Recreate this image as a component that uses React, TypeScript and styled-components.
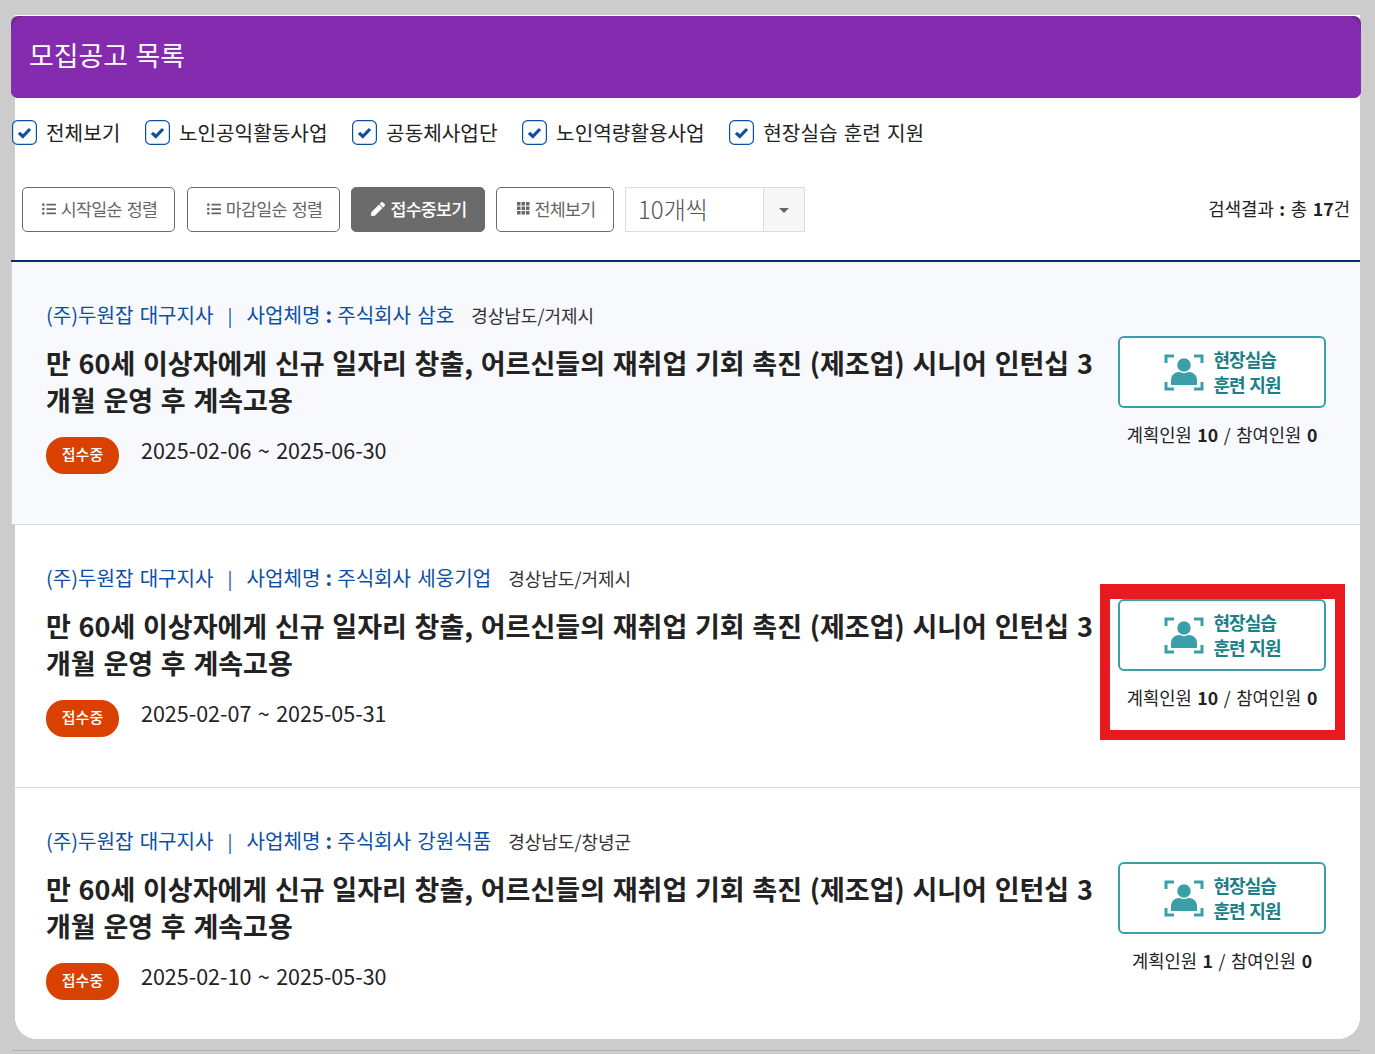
import React from 'react';
import styled, { createGlobalStyle } from 'styled-components';
import { FaListUl, FaPen } from 'react-icons/fa';

const GlobalStyle = createGlobalStyle`
  html, body {
    margin: 0;
    padding: 0;
    background: #cccccc;
    font-family: 'Noto Sans CJK KR', 'Noto Sans', sans-serif;
    word-spacing: 0.1em;
    color: #222222;
  }
`;

const Page = styled.div`
  width: 1375px;
  height: 1054px;
  padding: 15px 15px 0;
  box-sizing: border-box;
  overflow: hidden;
`;

const Card = styled.main`
  background: #ffffff;
  border-radius: 0 0 22px 22px;
  padding-top: 1px;
`;

const Header = styled.header`
  height: 82px;
  margin: 0 -1px 0 -4px;
  background: #6f2a96;
  border-radius: 7px;
  overflow: hidden;
`;

const HeaderFace = styled.div`
  height: 100%;
  box-sizing: border-box;
  padding: 0 0 3px 18px;
  display: flex;
  align-items: center;
  background: #852bb0;
  border-radius: 16px 16px 7px 7px;
`;

const Title = styled.h2`
  margin: 0;
  color: #ffffff;
  font-size: 26.9px;
  font-weight: 400;
  line-height: 1;
`;

const Filters = styled.div`
  height: 70px;
  margin-left: -3px;
  display: flex;
  align-items: center;
  gap: 24.6px;
`;

const Filter = styled.label`
  display: flex;
  align-items: center;
  gap: 9px;
  padding-top: 1px;
  font-size: 20.2px;
  line-height: 1;
  color: #222222;

  svg {
    margin-top: -3px;
  }
`;

const Toolbar = styled.div`
  height: 45px;
  margin: 19px 10px 28px 7px;
  display: flex;
  align-items: center;
  gap: 11px;
`;

const SortButton = styled.button<{ $active?: boolean; $w: number }>`
  width: ${({ $w }) => $w}px;
  height: 45px;
  padding: 0 0 2px 2px;
  display: flex;
  align-items: center;
  justify-content: center;
  gap: 5px;
  box-sizing: border-box;
  font-family: inherit;
  font-size: 17.33px;
  font-weight: ${({ $active }) => ($active ? 500 : 400)};
  letter-spacing: -0.7px;
  word-spacing: 0.1em;
  color: ${({ $active }) => ($active ? '#ffffff' : '#666666')};
  background: ${({ $active }) => ($active ? '#6b6b6b' : '#ffffff')};
  border: 1px solid #6b6b6b;
  border-radius: 5px;

  &:first-child {
    margin-right: 1px;
  }

  svg {
    font-size: 14px;
    flex: none;
  }
`;

const Select = styled.div`
  width: 180px;
  height: 45px;
  box-sizing: border-box;
  display: flex;
  border: 1px solid #dddddd;
  background: #ffffff;
`;

const SelectValue = styled.div`
  flex: 1;
  padding: 0 0 3px 12px;
  display: flex;
  align-items: center;
  font-size: 24px;
  font-weight: 300;
  color: #555555;
`;

const SelectArrow = styled.div`
  width: 40px;
  display: flex;
  align-items: center;
  justify-content: center;
  background: #f7f7f7;
  border-left: 1px solid #dddddd;

  &::before {
    content: '';
    margin-top: 2px;
    border-top: 5px solid #666666;
    border-left: 5px solid transparent;
    border-right: 5px solid transparent;
  }
`;

const ResultCount = styled.div`
  margin-left: auto;
  padding-bottom: 3px;
  font-size: 17.8px;

  b {
    font-weight: 700;
  }
`;

const List = styled.div`
  margin: 0 0 0 -4px;
  border-top: 2px solid #0a2a75;
`;

const Row = styled.article<{ $tinted?: boolean; $last?: boolean }>`
  position: relative;
  height: ${({ $last }) => ($last ? 251 : 263)}px;
  box-sizing: border-box;
  padding: 38px 34px 0 ${({ $tinted }) => ($tinted ? 34 : 31)}px;
  margin-left: ${({ $tinted }) => ($tinted ? 0 : 4)}px;
  display: flex;
  justify-content: space-between;
  background: ${({ $tinted }) => ($tinted ? '#f8f9fd' : '#ffffff')};
  border-bottom: ${({ $last }) => ($last ? 'none' : '1px solid #d4d6da')};
  border-left: ${({ $tinted }) => ($tinted ? '1px solid #d4d6da' : 'none')};
  border-radius: ${({ $last }) => ($last ? '0 0 22px 22px' : '0')};

  ${({ $tinted, $last }) =>
    !$tinted &&
    !$last &&
    `
    &::after {
      content: '';
      position: absolute;
      left: -3px;
      bottom: -1px;
      width: 3px;
      height: 1px;
      background: #d4d6da;
    }
  `}
`;

const RowBody = styled.div`
  width: 1050px;
`;

const Meta = styled.div`
  height: 30px;
  font-size: 20.1px;
  line-height: 30px;
  white-space: nowrap;
  color: #0d4fa3;
`;

const Divider = styled.span`
  margin: 0 14px;
  font-size: 18px;
`;

const Colon = styled.b<{ $tight?: boolean }>`
  font-weight: 700;
  margin: 0 ${({ $tight }) => ($tight ? -1 : 0)}px;
`;

const Region = styled.span`
  margin-left: 17px;
  font-size: 18px;
  color: #333333;
`;

const JobTitle = styled.h3`
  margin: 14px 0 0;
  font-size: 27px;
  font-weight: 700;
  line-height: 37px;
  color: #222222;
  word-break: break-all;
`;

const Period = styled.div`
  margin-top: 16px;
  display: flex;
  align-items: flex-start;
  gap: 22px;
  font-size: 21.5px;
  line-height: 32px;
  color: #222222;
`;

const Status = styled.span`
  width: 73px;
  height: 37px;
  box-sizing: border-box;
  padding-bottom: 3px;
  margin-top: 3px;
  display: flex;
  align-items: center;
  justify-content: center;
  background: #d94100;
  border-radius: 18px;
  color: #ffffff;
  font-size: 15px;
  font-weight: 500;
`;

const Side = styled.aside<{ $marked?: boolean }>`
  position: relative;
  width: 208px;
  margin-top: 36px;
  height: fit-content;

  ${({ $marked }) =>
    $marked &&
    `
    &::after {
      content: '';
      position: absolute;
      top: -15px;
      left: -18px;
      right: -19px;
      height: 156px;
      box-sizing: border-box;
      border: 10px solid #e71a20;
      border-top-width: 15px;
    }
  `}
`;

const TrainingBox = styled.div`
  height: 72px;
  box-sizing: border-box;
  display: flex;
  align-items: center;
  justify-content: center;
  gap: 10px;
  background: #ffffff;
  border: 2px solid #3a9fa8;
  border-radius: 6px;
`;

const TrainingText = styled.div`
  font-size: 18px;
  font-weight: 700;
  line-height: 25px;
  letter-spacing: -1px;
  color: #1d7f88;
`;

const Headcount = styled.div`
  margin-top: 12px;
  text-align: center;
  font-size: 17.7px;
  line-height: 28px;
  color: #222222;

  b {
    font-weight: 700;
  }
`;

const BottomRule = styled.div`
  height: 1px;
  margin: 11px 0 0 -3px;
  background: #b0b0b0;
`;

const CheckIcon = () => (
  <svg width="25" height="25" viewBox="0 0 25 25" fill="none">
    <rect x="0.6" y="0.6" width="23.8" height="23.8" rx="5" fill="#fff" stroke="#0d4fa3" strokeWidth="1.2" />
    <path d="M7 12.8l3.8 3.7L18 9" stroke="#0d4fa3" strokeWidth="3.2" />
  </svg>
);

const GridIcon = () => (
  <svg width="13" height="13" viewBox="0 0 13 13" fill="#666666">
    {[0, 4.5, 9].map((y) =>
      [0, 4.5, 9].map((x) => <rect key={`${x}-${y}`} x={x} y={y} width="3.5" height="3.5" />),
    )}
  </svg>
);

const PersonIcon = () => (
  <svg width="40" height="38" viewBox="0 0 40 38" fill="none">
    <path d="M2 10V3h8M30 3h8v7M2 29v7h8M30 36h8v-7" stroke="#3a9fa8" strokeWidth="3" />
    <path d="M7 32v-5c0-5 4-8 8-8h10c4 0 8 3 8 8v5z" fill="#3a9fa8" />
    <circle cx="20" cy="12" r="7.5" fill="#3a9fa8" stroke="#fff" strokeWidth="1.5" />
  </svg>
);

const filters = ['전체보기', '노인공익활동사업', '공동체사업단', '노인역량활용사업', '현장실습 훈련 지원'];

const jobs = [
  { company: '주식회사 삼호', region: '경상남도/거제시', period: '2025-02-06 ~ 2025-06-30', planned: 10 },
  { company: '주식회사 세웅기업', region: '경상남도/거제시', period: '2025-02-07 ~ 2025-05-31', planned: 10 },
  { company: '주식회사 강원식품', region: '경상남도/창녕군', period: '2025-02-10 ~ 2025-05-30', planned: 1 },
];

export default function App() {
  return (
    <Page>
      <GlobalStyle />
      <Card>
        <Header>
          <HeaderFace>
            <Title>모집공고 목록</Title>
          </HeaderFace>
        </Header>
        <Filters>
          {filters.map((name) => (
            <Filter key={name}>
              <CheckIcon />
              {name}
            </Filter>
          ))}
        </Filters>
        <Toolbar>
          <SortButton $w={153}>
            <FaListUl />
            시작일순 정렬
          </SortButton>
          <SortButton $w={153}>
            <FaListUl />
            마감일순 정렬
          </SortButton>
          <SortButton $w={134} $active>
            <FaPen />
            접수중보기
          </SortButton>
          <SortButton $w={118}>
            <GridIcon />
            전체보기
          </SortButton>
          <Select>
            <SelectValue>10개씩</SelectValue>
            <SelectArrow />
          </Select>
          <ResultCount>
            검색결과 <Colon>:</Colon> 총 <b>17</b>건
          </ResultCount>
        </Toolbar>
        <List>
          {jobs.map((job, i) => (
            <Row key={job.company} $tinted={i === 0} $last={i === jobs.length - 1}>
              <RowBody>
                <Meta>
                  (주)두원잡 대구지사
                  <Divider>|</Divider>
                  사업체명 <Colon $tight>:</Colon> {job.company}
                  <Region>{job.region}</Region>
                </Meta>
                <JobTitle>
                  만 60세 이상자에게 신규 일자리 창출, 어르신들의 재취업 기회 촉진 (제조업) 시니어 인턴십 3개월 운영 후 계속고용
                </JobTitle>
                <Period>
                  <Status>접수중</Status>
                  {job.period}
                </Period>
              </RowBody>
              <Side $marked={i === 1}>
                <TrainingBox>
                  <PersonIcon />
                  <TrainingText>
                    현장실습
                    <br />
                    훈련 지원
                  </TrainingText>
                </TrainingBox>
                <Headcount>
                  계획인원 <b>{job.planned}</b> / 참여인원 <b>0</b>
                </Headcount>
              </Side>
            </Row>
          ))}
        </List>
      </Card>
      <BottomRule />
    </Page>
  );
}
